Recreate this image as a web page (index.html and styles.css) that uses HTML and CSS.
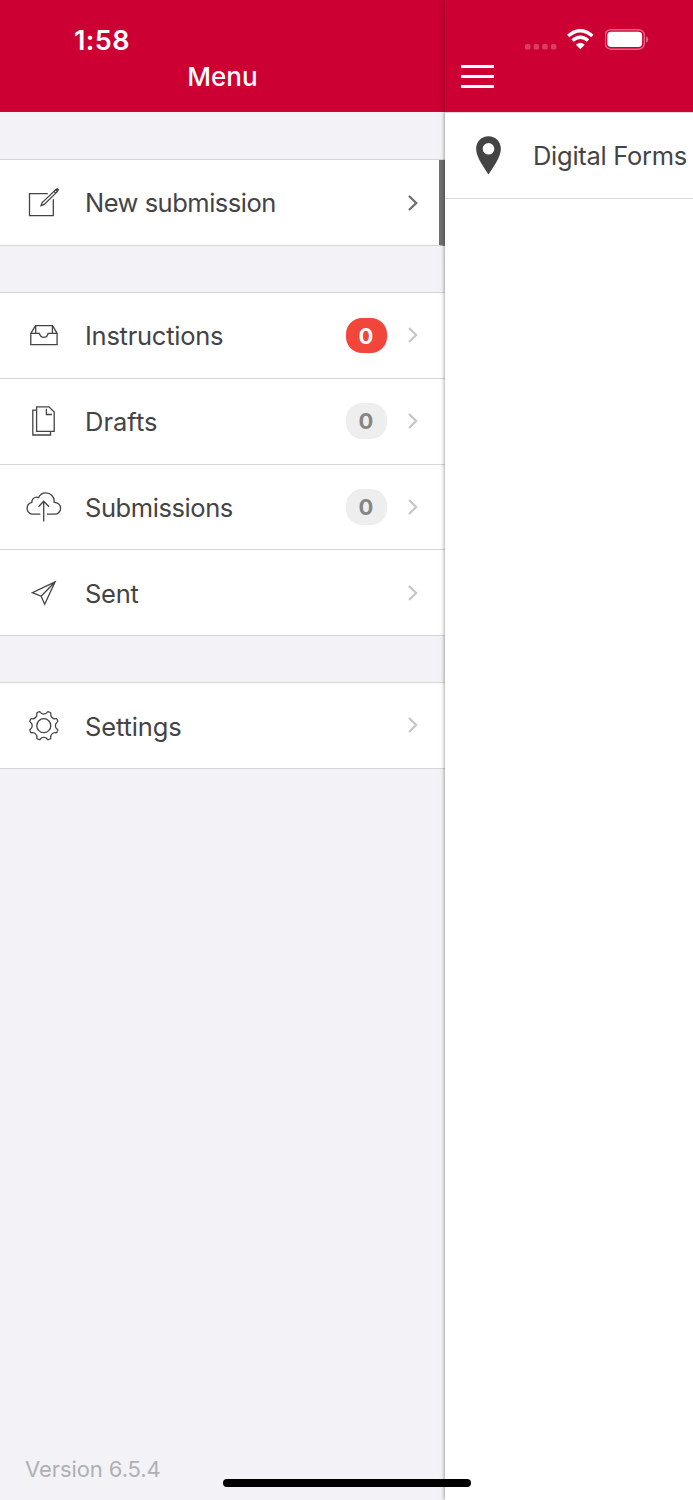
FILE: index.html
```html
<!DOCTYPE html>
<html lang="en">
<head>
<meta charset="utf-8">
<title>Menu</title>
<link rel="stylesheet" href="styles.css">
</head>
<body>
<svg class="defs" width="0" height="0">
  <symbol id="chevron" viewBox="0 0 12 18"><path d="M2 2l7.200 7L2 16"/></symbol>
  <path id="cog" d="M-5.600-13.500L-4.700-13.900Q-3.900-14.200-3.500-13.400C-2.700-12-1.400-11.600 0-11.600S2.700-12 3.500-13.400Q3.900-14.200 4.700-13.900L5.600-13.500"/>
</svg>
<div class="screen">
  <aside class="menu">
    <header class="menu-header">
      <div class="time">1:58</div>
      <h1 class="title">Menu</h1>
    </header>
    <nav class="groups">
      <section class="group">
        <a class="row active">
          <svg class="icon" viewBox="0 0 36 36"><path d="M21.800 8.600H3.500v22h23.800V14.300"/><path d="M15 20.700l1.200-3.200L29.600 4.800l1.800 1.800L18.200 19.400zM28 6.400l1.800 1.800"/><path d="M30 4.500l1.300-.8 1 1-.9 1.200z" fill="#444"/></svg>
          <span class="label t-new">New submission</span>
          <svg class="chevron"><use href="#chevron"/></svg>
        </a>
      </section>
      <section class="group">
        <a class="row">
          <svg class="icon" viewBox="0 0 36 36"><path d="M4.800 16.300L9.600 8.700h16.900L31.100 16.300v11.300H4.800zM4.800 16.300h8.700c.6 2.700 2.100 4.100 4.300 4.100s3.700-1.400 4.300-4.100h9M9.700 9.300v7M26.400 9.300v7"/></svg>
          <span class="label t-ins">Instructions</span>
          <span class="badge alert">0</span>
          <svg class="chevron"><use href="#chevron"/></svg>
        </a>
        <a class="row">
          <svg class="icon" viewBox="0 0 36 36"><path d="M10.600 3.800h12.400l5.200 5.300v19.300H10.600zM20.400 5.800v5.700h5.500M10.600 7.200H6.800v24.800h17.700v-3.600"/></svg>
          <span class="label">Drafts</span>
          <span class="badge">0</span>
          <svg class="chevron"><use href="#chevron"/></svg>
        </a>
        <a class="row">
          <svg class="icon" viewBox="0 0 36 36"><path d="M14.300 25.200H6.900C3.600 25.200 1.100 22.500 1.100 19.400c0-3.100 2.100-5.300 4.700-6-.1-3.100 2.200-5.200 4.800-5.200.8 0 1.300.2 1.900.5 1.300-2.900 4-4.900 7.300-4.900 4.700 0 8.400 3.600 8.400 8.300v1.200c3.600 0 6.400 2.700 6.400 6s-2.700 5.900-6 5.900H21"/><path d="M17.700 32.500V12.400M12.500 17.700l5.200-5.400 5.300 5.400"/></svg>
          <span class="label t-sub">Submissions</span>
          <span class="badge">0</span>
          <svg class="chevron"><use href="#chevron"/></svg>
        </a>
        <a class="row">
          <svg class="icon" viewBox="0 0 36 36"><path d="M29.100 6.800L6.400 17.600l8.700 3.600 3.600 8zM29.100 6.800l-14 14.400"/></svg>
          <span class="label t-sen">Sent</span>
          <svg class="chevron"><use href="#chevron"/></svg>
        </a>
      </section>
      <section class="group">
        <a class="row">
          <svg class="icon" viewBox="0 0 36 36"><g transform="translate(17.800 18.700)"><circle r="7"/><use href="#cog"/><use href="#cog" transform="rotate(45)"/><use href="#cog" transform="rotate(90)"/><use href="#cog" transform="rotate(135)"/><use href="#cog" transform="rotate(180)"/><use href="#cog" transform="rotate(225)"/><use href="#cog" transform="rotate(270)"/><use href="#cog" transform="rotate(315)"/></g></svg>
          <span class="label t-set">Settings</span>
          <svg class="chevron"><use href="#chevron"/></svg>
        </a>
      </section>
    </nav>
    <footer class="version">Version 6.5.4</footer>
  </aside>
  <main class="content">
    <header class="content-header">
      <div class="status">
        <svg width="32" height="22" viewBox="0 0 32 22" fill="#fff" fill-opacity=".24"><rect x="0" y="15" width="5.500" height="5.500" rx="1.500"/><rect x="8.600" y="15" width="5.500" height="5.500" rx="1.500"/><rect x="17.200" y="15" width="5.500" height="5.500" rx="1.500"/><rect x="25.900" y="15" width="5.500" height="5.500" rx="1.500"/></svg>
        <svg class="wifi" width="28" height="22" viewBox="0 0 28 22"><path d="M2.200 7Q14.300-3.700 26.400 7M6.500 11.500Q14.300 4.900 22.100 11.500" fill="none" stroke="#fff" stroke-width="3.400"/><path d="M9.900 15.700Q14.300 11.800 18.700 15.700L14.300 20.200z" fill="#fff"/></svg>
        <svg class="battery" width="45" height="22" viewBox="0 0 45 22"><rect x=".300" y=".700" width="39" height="19.500" rx="5.500" fill="none" stroke="#fff" stroke-opacity=".4" stroke-width="1.400"/><rect x="2.300" y="2.800" width="34.800" height="15.200" rx="3.700" fill="#fff"/><path d="M41 7.200q2.200 1 2.200 3.300t-2.200 3.300z" fill="#fff" fill-opacity=".4"/></svg>
      </div>
      <div class="burger"><i></i><i></i><i></i></div>
    </header>
    <div class="place">
      <svg width="27" height="40" viewBox="-.5 0 27 40"><path fill="#444" fill-rule="evenodd" d="M13 .200C6 .200.600 5.700.600 12.600.600 21.600 9 32.200 13 38.600 17 32.200 25.400 21.600 25.400 12.600 25.400 5.700 20 .200 13 .200zM13 7a5.800 5.800 0 1 1 0 11.600A5.800 5.800 0 0 1 13 7z"/></svg>
      <span>Digital Forms</span>
    </div>
  </main>
  <div class="home"></div>
</div>
</body>
</html>
```
FILE: styles.css
```css
* { box-sizing: border-box; }
body { margin: 0; font-family: Inter, "Liberation Sans", sans-serif; color: #444; }
.defs { position: absolute; }
.screen { position: relative; display: flex; width: 693px; height: 1500px; overflow: hidden; background: #fff; }
.menu { display: flex; flex-direction: column; width: 445px; background: #f2f2f7; }
.menu-header { height: 112px; padding-top: 24px; background: #cc0032; color: #fff; border-bottom: 1px solid #ba1038; }
.time { padding-left: 74px; font-size: 27px; font-weight: 600; line-height: 34px; letter-spacing: .4px; }
.title { margin: 2px 0 0; font-size: 26px; font-weight: 500; line-height: 34px; text-align: center; }
.groups { display: flex; flex-direction: column; gap: 46px; padding-top: 47px; }
.group { border-top: 1px solid #d6d6d9; }
.group:first-child { height: 87px; }
.row { display: flex; align-items: center; height: 85.750px; padding: 0 26px; border-bottom: 1px solid #d6d6d9; background: #fff; }
.icon { width: 36px; height: 36px; fill: none; stroke: #444; stroke-width: 1.300; }
.label { margin-left: 23px; margin-right: auto; padding-top: 1px; font-size: 25.500px; line-height: 34px; white-space: nowrap; }
.t-new { letter-spacing: -.5px; }
.t-ins { letter-spacing: -.260px; }
.t-sub { padding-top: 2px; letter-spacing: -.420px; }
.t-sen { padding-top: 2px; letter-spacing: -.250px; }
.t-set { padding-top: 3px; letter-spacing: -.120px; }
.badge { width: 41px; height: 35.500px; margin-right: 20px; border-radius: 16px; background: #eee; color: #858585; font-size: 22px; font-weight: 650; line-height: 36px; text-align: center; text-indent: -1px; }
.badge.alert { background: #f2463a; color: #fff; }
.chevron { width: 12px; height: 18px; fill: none; stroke: #c5c5c8; stroke-width: 2.100; }
.active { height: 86px; padding-right: 20px; border-right: 6px solid #707070; }
.active .chevron { margin-top: 1px; stroke: #707070; stroke-width: 2.400; }
.version { margin-top: auto; padding: 0 25px 16px; font-size: 22px; line-height: 30px; letter-spacing: -.080px; color: #b0b0b2; }
.content { position: relative; display: flex; flex-direction: column; width: 248px; background: #fff; box-shadow: 0 0 4px rgba(0, 0, 0, .5); }
.content-header { height: 112px; padding: 29px 0 0 16px; background: #cc0032; border-bottom: 1px solid #ba1038; }
.status { display: flex; height: 22px; padding-left: 64px; margin-bottom: 14px; }
.wifi { margin-left: 9px; }
.battery { margin-left: 11px; }
.burger { display: flex; flex-direction: column; gap: 7px; width: 33px; }
.burger i { height: 3px; background: #fff; }
.place { display: flex; align-items: center; height: 87px; padding-left: 30px; border-top: 1px solid #d8d8d8; border-bottom: 1px solid #d8d8d8; font-size: 25.500px; line-height: 34px; letter-spacing: -.280px; white-space: nowrap; }
.place span { margin-left: 31px; padding-top: 1px; }
.home { position: absolute; left: 223px; top: 1478.500px; width: 247.500px; height: 8.300px; border-radius: 5px; background: #000; }
```
